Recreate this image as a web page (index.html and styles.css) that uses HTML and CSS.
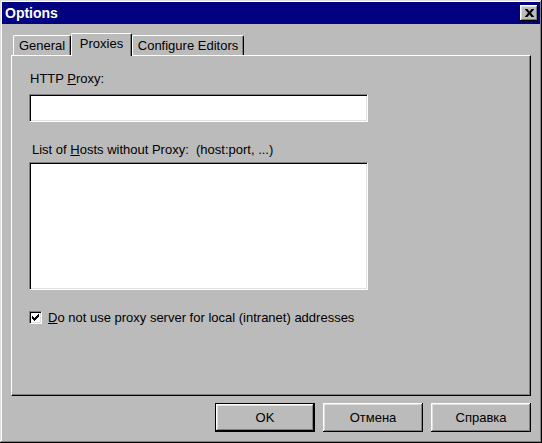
FILE: index.html
```html
<!DOCTYPE html>
<html>
<head>
<meta charset="utf-8">
<link rel="stylesheet" href="styles.css">
</head>
<body>
<div class="window">
  <div class="titlebar">
    <span class="title">Options</span>
    <button class="close" aria-label="Close">
      <svg width="9" height="8" viewBox="0 0 9 8"><path d="M0 0h2.5L4.5 2.5 6.5 0H9v0.5L6 4l3 3.5V8H6.5L4.5 5.5 2.5 8H0v-0.5L3 4 0 0.5z" fill="#000"/></svg>
    </button>
  </div>
  <div class="content">
    <div class="tabs">
      <div class="tab tab-general">General</div>
      <div class="tab active">Proxies</div>
      <div class="tab tab-editors">Configure Editors</div>
    </div>
    <div class="panel">
      <div class="lbl lbl-proxy">HTTP <u>P</u>roxy:</div>
      <div class="field input"></div>
      <div class="lbl lbl-hosts">List of <u>H</u>osts without Proxy:&nbsp; (host:port, ...)</div>
      <div class="field textarea"></div>
      <div class="check-row">
        <span class="checkbox">
          <svg width="7" height="7" viewBox="0 0 7 7"><path d="M0 2h1v1h1v1h1V3h1V2h1V1h1V0h1v3H6v1H5v1H4v1H3v1H2V6H1V5H0z" fill="#000"/></svg>
        </span>
        <span class="check-label"><u>D</u>o not use proxy server for local (intranet) addresses</span>
      </div>
    </div>
    <div class="buttons">
      <button class="btn default">OK</button>
      <button class="btn">Отмена</button>
      <button class="btn">Справка</button>
    </div>
  </div>
</div>
</body>
</html>
```
FILE: styles.css
```css
html, body {
  margin: 0;
  padding: 0;
}
body {
  width: 542px;
  height: 443px;
  background: #bbbbbb;
  font-family: "Liberation Sans", Arial, sans-serif;
  font-size: 13px;
  color: #000;
  overflow: hidden;
}
.window {
  box-sizing: border-box;
  width: 542px;
  height: 443px;
  padding: 2px;
  background: #bbbbbb;
  box-shadow: inset -1px -1px #000, inset 1px 1px #dfdfdf, inset -2px -2px #808080, inset 2px 2px #fff;
  display: flex;
  flex-direction: column;
}
.titlebar {
  height: 22px;
  background: #000080;
  display: flex;
  align-items: center;
  justify-content: space-between;
  padding: 0 2px 0 3px;
}
.title {
  color: #fff;
  font-weight: bold;
  font-size: 14px;
  line-height: 16px;
}
.close {
  width: 18px;
  height: 16px;
  padding: 0;
  border: 0;
  background: #bbbbbb;
  box-shadow: inset -1px -1px #000, inset 1px 1px #fff, inset -2px -2px #808080, inset 2px 2px #dfdfdf;
  display: flex;
  align-items: center;
  justify-content: center;
}
.close svg {
  display: block;
}
.content {
  padding: 9px 9px 0 9px;
  display: flex;
  flex-direction: column;
}
.tabs {
  display: flex;
  align-items: flex-end;
  height: 22px;
  padding-left: 2px;
}
.tab {
  box-sizing: border-box;
  height: 20px;
  padding: 2px 0 0 0;
  line-height: 15px;
  text-align: center;
  white-space: nowrap;
  border-top: 1px solid #fff;
  border-left: 1px solid #fff;
  border-right: 1px solid #000;
  border-radius: 2px 2px 0 0;
  box-shadow: inset -1px 0 #808080;
  background: #bbbbbb;
}
.tab-general {
  width: 58px;
}
.tab-editors {
  width: 112px;
}
.tab.active {
  position: relative;
  z-index: 1;
  width: 61px;
  height: 23px;
  margin-bottom: -1px;
}
.panel {
  box-sizing: border-box;
  height: 341px;
  padding: 15px 17px 0 17px;
  border: 1px solid;
  border-color: #fff #000 #000 #fff;
  box-shadow: inset -1px -1px #808080;
  display: flex;
  flex-direction: column;
  align-items: flex-start;
}
.lbl {
  line-height: 15px;
  white-space: nowrap;
}
.lbl-proxy {
  margin-left: 1px;
}
.lbl-hosts {
  margin-left: 3px;
  margin-top: 20px;
}
.field {
  box-sizing: border-box;
  width: 339px;
  background: #fff;
  border: 1px solid;
  border-color: #808080 #fff #fff #808080;
  box-shadow: inset 1px 1px #000, inset -1px -1px #dfdfdf;
}
.input {
  height: 28px;
  margin-top: 8px;
}
.textarea {
  height: 128px;
  margin-top: 5px;
}
.check-row {
  display: flex;
  align-items: center;
  gap: 6px;
  margin-top: 20px;
  line-height: 15px;
}
.checkbox {
  box-sizing: border-box;
  width: 13px;
  height: 13px;
  background: #fff;
  border: 1px solid;
  border-color: #808080 #fff #fff #808080;
  box-shadow: inset 1px 1px #000, inset -1px -1px #dfdfdf;
  display: flex;
  align-items: center;
  justify-content: center;
}
.checkbox svg {
  display: block;
}
.check-label {
  white-space: nowrap;
}
.buttons {
  display: flex;
  justify-content: flex-end;
  gap: 8px;
  margin-top: 7px;
}
.btn {
  box-sizing: border-box;
  width: 100px;
  height: 29px;
  padding: 0;
  border: 0;
  background: #bbbbbb;
  font-family: "Liberation Sans", Arial, sans-serif;
  font-size: 13px;
  color: #000;
  box-shadow: inset -1px -1px #000, inset 1px 1px #fff, inset -2px -2px #808080, inset 2px 2px #dfdfdf;
}
.btn.default {
  border: 1px solid #000;
}
```
